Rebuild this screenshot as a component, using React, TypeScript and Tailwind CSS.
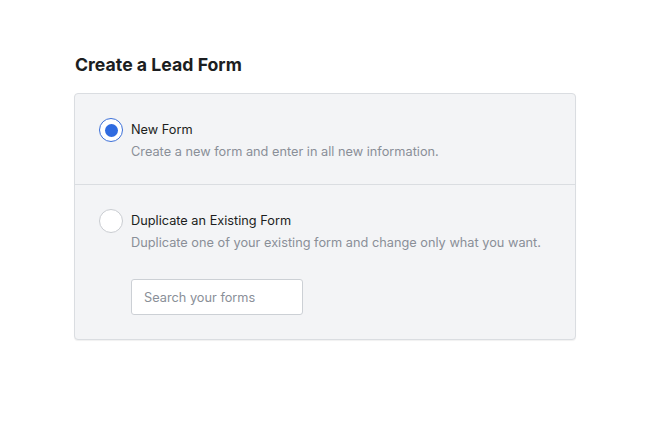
import React, { useState } from 'react';

type Choice = 'new' | 'duplicate';

const Radio: React.FC<{ checked: boolean; onClick: () => void }> = ({ checked, onClick }) => (
  <button
    type="button"
    onClick={onClick}
    className={`flex h-6 w-6 shrink-0 items-center justify-center rounded-full border bg-white ${
      checked ? 'border-[#3b6fd8]' : 'border-[#c9ccd1]'
    }`}
  >
    {checked && <span className="h-[13px] w-[13px] rounded-full bg-[#2f6be0]" />}
  </button>
);

export default function App() {
  const [choice, setChoice] = useState<Choice>('new');

  return (
    <div className="min-h-[430px] bg-white pl-[74px] pt-[54px] font-['Inter',sans-serif]">
      <h1 className="mb-[17px] pl-px text-[17.7px] font-bold leading-[22px] text-[#1c1e21]">
        Create a Lead Form
      </h1>

      <div className="w-[502px] overflow-hidden rounded border border-[#dadde1] bg-[#f3f4f6] shadow-[0_1px_1px_rgba(0,0,0,0.06)]">
        {/* New form */}
        <div className="flex gap-2 border-b border-[#dadde1] px-6 pb-[23px] pt-6">
          <Radio checked={choice === 'new'} onClick={() => setChoice('new')} />
          <div className="pt-[3px]">
            <div className="text-[12.75px] leading-[18px] text-[#1c1e21]">New Form</div>
            <div className="mt-[4px] text-[12.75px] leading-[18px] text-[#8a8f98]">
              Create a new form and enter in all new information.
            </div>
          </div>
        </div>

        {/* Duplicate */}
        <div className="flex gap-2 px-6 pb-6 pt-6">
          <Radio checked={choice === 'duplicate'} onClick={() => setChoice('duplicate')} />
          <div className="pt-[3px]">
            <div className="text-[12.75px] leading-[18px] text-[#1c1e21]">Duplicate an Existing Form</div>
            <div className="mt-[4px] text-[12.75px] leading-[18px] text-[#8a8f98]">
              Duplicate one of your existing form and change only what you want.
            </div>
            <input
              placeholder="Search your forms"
              className="mt-[27px] h-9 w-[172px] rounded-[3px] border border-[#ccd0d5] bg-white px-3 text-[12.75px] text-[#1c1e21] outline-none placeholder:text-[#8a8f98]"
            />
          </div>
        </div>
      </div>
    </div>
  );
}
